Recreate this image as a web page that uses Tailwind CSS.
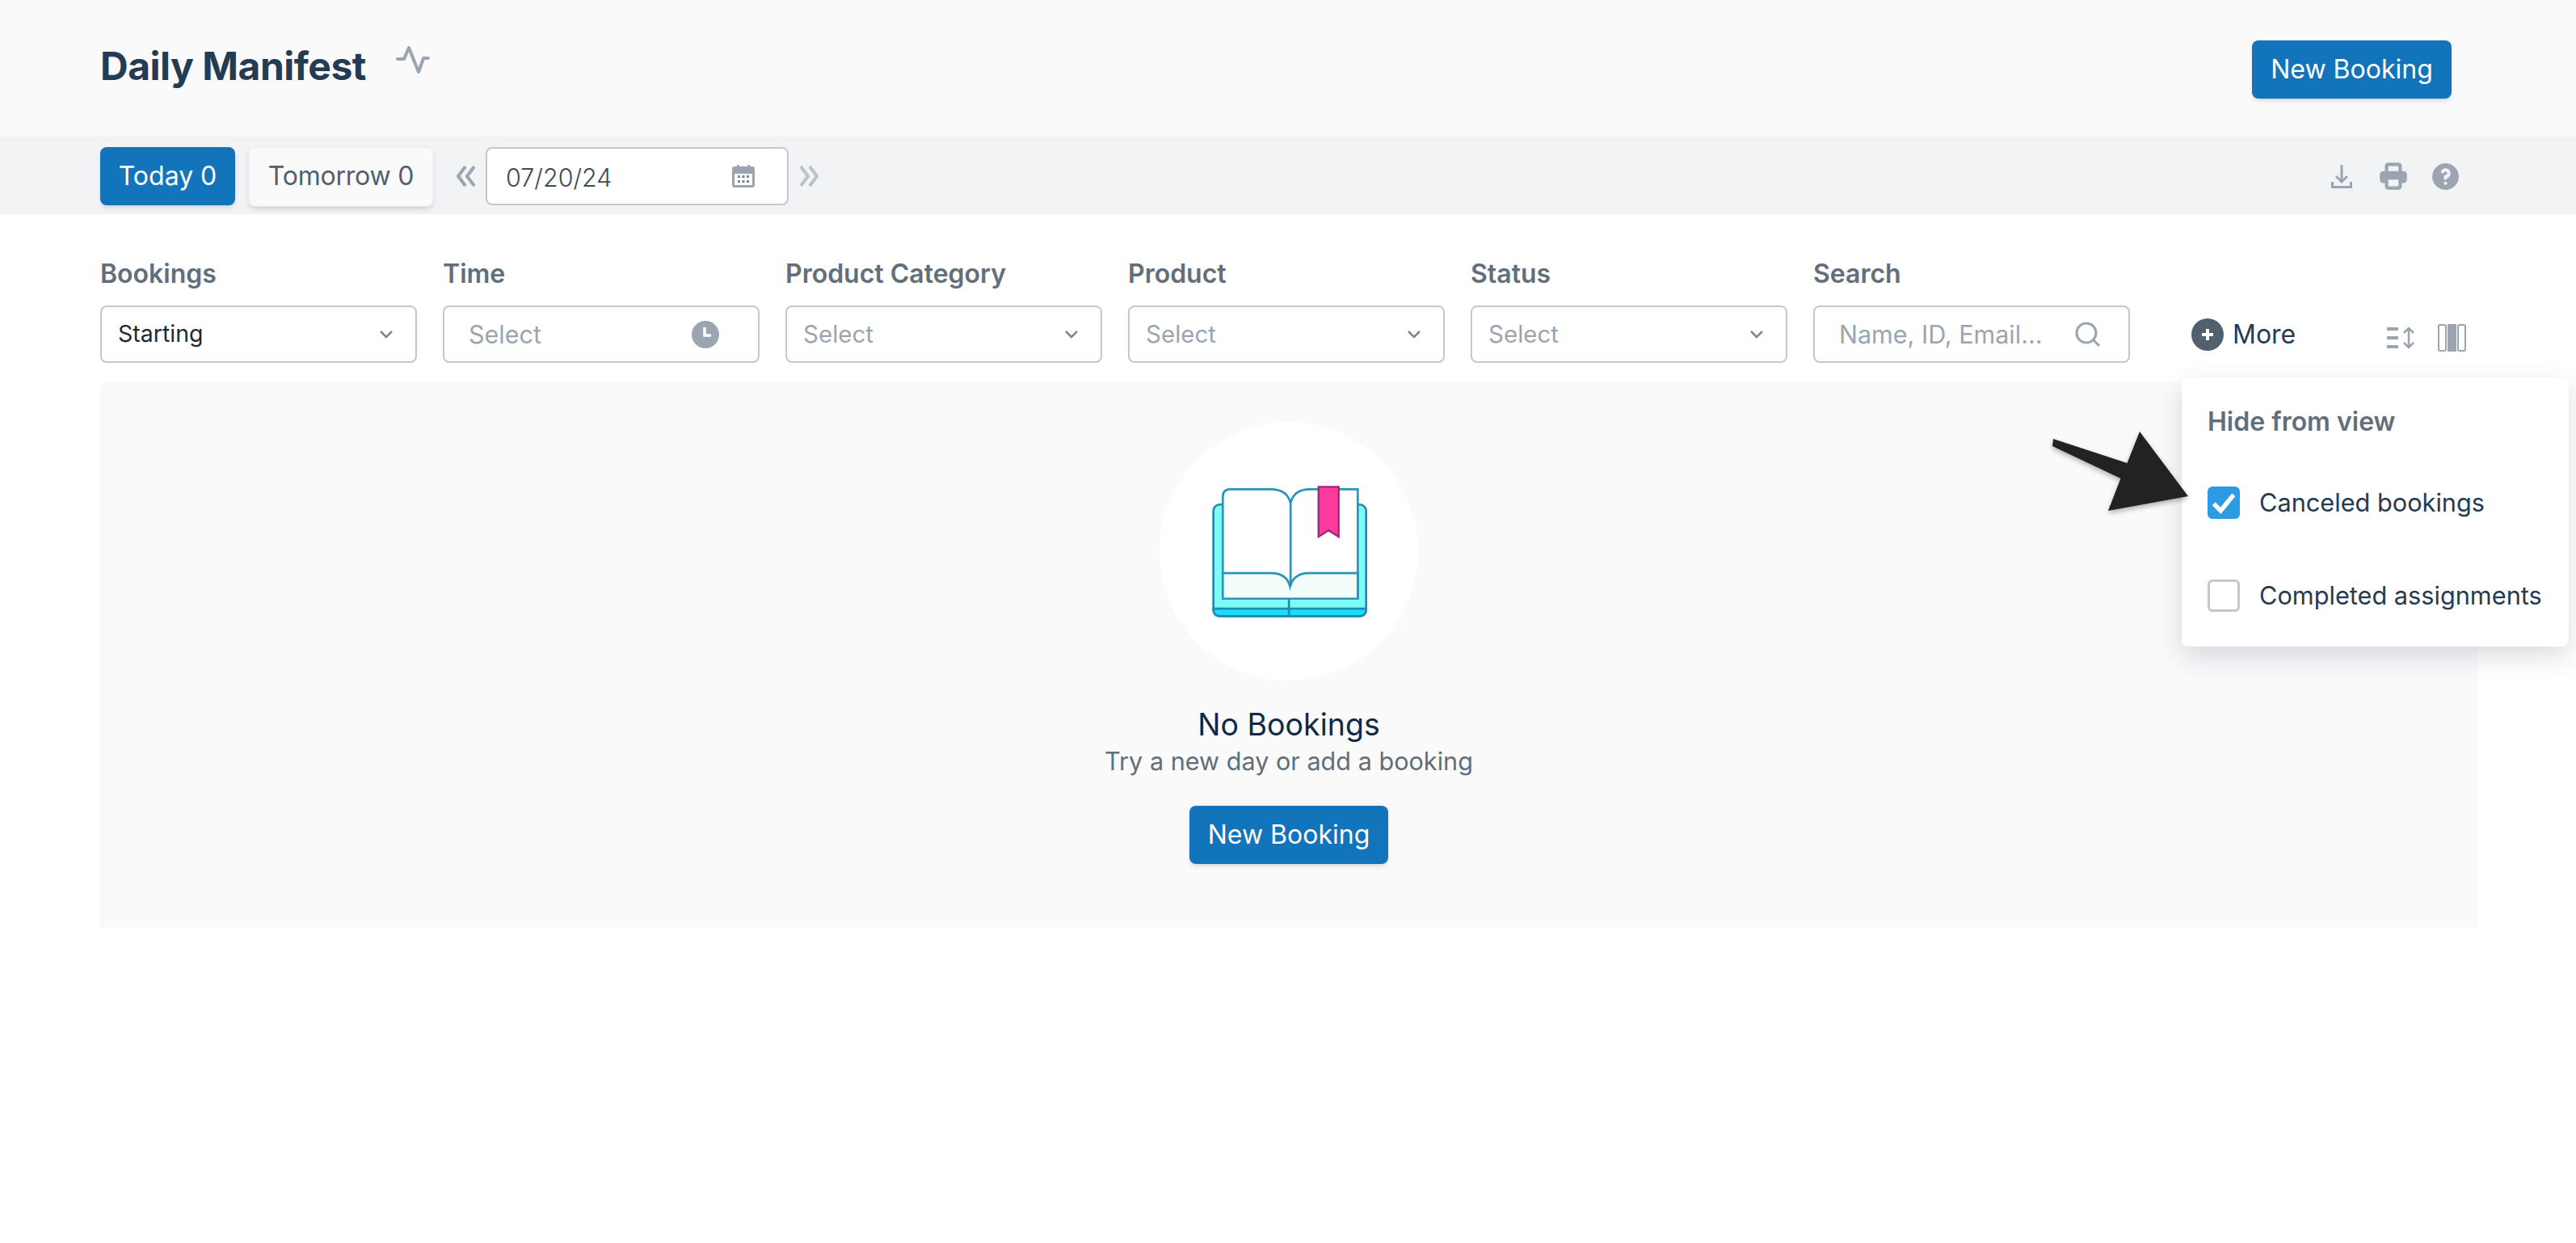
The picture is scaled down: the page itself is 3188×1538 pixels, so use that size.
<!DOCTYPE html>
<html lang="en">
<head>
    <meta charset="utf-8">
    <title>Daily Manifest</title>
    <script src="https://cdn.jsdelivr.net/npm/@tailwindcss/browser@4"></script>
</head>
<body class="relative min-h-screen overflow-hidden bg-white font-['Inter',sans-serif] text-[#1f2933]">

    <header class="flex h-[169px] items-start justify-between bg-[#fafafb] pr-[154px] pl-[124px] pt-[48px]">
        <div class="flex items-start">
            <h1 class="mt-[2px] text-[48px] leading-[64px] font-bold tracking-[-0.5px] text-[#243b53]">Daily Manifest</h1>
            <svg class="mt-[8px] ml-[37px] h-[36px] w-[42px]" viewBox="0 0 42 36" fill="none" stroke="#9aa5b1" stroke-width="4" stroke-linecap="round" stroke-linejoin="round">
                <path d="M2 17h8l6-14 12 30 6-17h6"/>
            </svg>
        </div>
        <button class="mt-[2px] h-[72px] w-[247px] rounded-[8px] bg-[#1274bb] text-[32px] text-white shadow-md">New Booking</button>
    </header>

    <div class="flex h-[96px] items-center justify-between bg-[#f2f3f5] pt-[2px] pr-[145px] pl-[124px]">
        <div class="flex items-center">
            <button class="h-[72px] w-[167px] rounded-[8px] bg-[#1274bb] text-[32px] text-white shadow-md">Today 0</button>
            <button class="ml-[16px] h-[75px] w-[230px] rounded-[8px] border-2 border-[#eceef1] bg-[#fafafb] text-[32px] tracking-[-0.2px] text-[#52606d] shadow-md">Tomorrow 0</button>
            <svg class="ml-[28px] h-[26px] w-[24px]" viewBox="0 0 24 26" fill="none" stroke="#9aa5b1" stroke-width="4">
                <path d="M11 1 2 13l9 12M22 1l-9 12 9 12"/>
            </svg>
            <div class="ml-[12px] flex h-[72px] w-[375px] items-center justify-between rounded-[8px] border-2 border-[#c4c7cd] bg-white pr-[40px] pl-[23px]">
                <span class="mt-[3px] text-[30.500px] font-light text-[#3e4c59]">07/20/24</span>
                <svg class="h-[28px] w-[28px]" viewBox="0 0 28 28">
                    <path fill="#9aa5b1" fill-rule="evenodd" d="M6 0h3v2h10V0h3v2h3a3 3 0 0 1 3 3v20a3 3 0 0 1-3 3H3a3 3 0 0 1-3-3V5a3 3 0 0 1 3-3h3zM3 9v16h22V9z"/>
                    <path fill="#9aa5b1" d="M2 7h24v4H2z"/>
                    <g fill="#7b8794">
                        <rect x="7" y="13" width="3" height="3"/><rect x="12.500" y="13" width="3" height="3"/><rect x="18" y="13" width="3" height="3"/>
                        <rect x="7" y="19" width="3" height="3"/><rect x="12.500" y="19" width="3" height="3"/><rect x="18" y="19" width="3" height="3"/>
                    </g>
                </svg>
            </div>
            <svg class="ml-[13px] h-[26px] w-[24px]" viewBox="0 0 24 26" fill="none" stroke="#bcc2ca" stroke-width="4">
                <path d="m2 1 9 12-9 12M13 1l9 12-9 12"/>
            </svg>
        </div>
        <div class="flex items-center">
            <svg class="h-[30px] w-[26px]" viewBox="0 0 26 30" fill="none" stroke="#9aa5b1" stroke-width="3">
                <path d="M13 1v21M6 15l7 7 7-7M1.500 22v6.500h23V22"/>
            </svg>
            <svg class="ml-[30px] h-[42px] w-[42px]" viewBox="0 0 20 20" fill="#9aa5b1">
                <path fill-rule="evenodd" d="M5 4v3H4a2 2 0 00-2 2v3a2 2 0 002 2h1v2a2 2 0 002 2h6a2 2 0 002-2v-2h1a2 2 0 002-2V9a2 2 0 00-2-2h-1V4a2 2 0 00-2-2H7a2 2 0 00-2 2zm8 0H7v3h6V4zm0 8H7v4h6v-4z" clip-rule="evenodd"/>
            </svg>
            <svg class="ml-[23px] h-[41px] w-[41px] -mr-[4px]" viewBox="0 0 20 20" fill="#9aa5b1">
                <path fill-rule="evenodd" d="M18 10a8 8 0 11-16 0 8 8 0 0116 0zm-8-3a1 1 0 00-.867.5 1 1 0 11-1.731-1A3 3 0 0113 8a3.001 3.001 0 01-2 2.83V11a1 1 0 11-2 0v-1a1 1 0 011-1 1 1 0 100-2zm0 8a1 1 0 100-2 1 1 0 000 2z" clip-rule="evenodd"/>
            </svg>
        </div>
    </div>

    <main class="pr-[122px] pl-[124px]">
        <div class="flex gap-[32px] pt-[54px]">
            <div class="w-[392px]">
                <label class="mb-[19px] block text-[32px] leading-[40px] font-semibold text-[#616e7c]">Bookings</label>
                <div class="flex h-[71px] items-center justify-between rounded-[8px] border-2 border-[#c4c7cd] pr-[27px] pl-[20px] text-[28.500px]">
                    <span>Starting</span>
                    <svg class="h-[12px] w-[18px]" viewBox="0 0 18 12" fill="none" stroke="#7b8794" stroke-width="2.500"><path d="m2 2 7 7 7-7"/></svg>
                </div>
            </div>
            <div class="w-[392px]">
                <label class="mb-[19px] block text-[32px] leading-[40px] font-semibold text-[#616e7c]">Time</label>
                <div class="flex h-[71px] items-center justify-between rounded-[8px] border-2 border-[#c4c7cd] pr-[48px] pl-[30px] text-[30.500px] text-[#9aa5b1]">
                    <span>Select</span>
                    <svg class="h-[34px] w-[34px]" viewBox="0 0 34 34">
                        <circle cx="17" cy="17" r="17" fill="#9aa5b1"/>
                        <path d="M16 8v10h8" fill="none" stroke="#fff" stroke-width="3.500"/>
                    </svg>
                </div>
            </div>
            <div class="w-[392px]">
                <label class="mb-[19px] block text-[32px] leading-[40px] font-semibold text-[#616e7c]">Product Category</label>
                <div class="flex h-[71px] items-center justify-between rounded-[8px] border-2 border-[#c4c7cd] pr-[27px] pl-[20px] text-[29.500px] text-[#9aa5b1]">
                    <span>Select</span>
                    <svg class="h-[12px] w-[18px]" viewBox="0 0 18 12" fill="none" stroke="#7b8794" stroke-width="2.500"><path d="m2 2 7 7 7-7"/></svg>
                </div>
            </div>
            <div class="w-[392px]">
                <label class="mb-[19px] block text-[32px] leading-[40px] font-semibold text-[#616e7c]">Product</label>
                <div class="flex h-[71px] items-center justify-between rounded-[8px] border-2 border-[#c4c7cd] pr-[27px] pl-[20px] text-[29.500px] text-[#9aa5b1]">
                    <span>Select</span>
                    <svg class="h-[12px] w-[18px]" viewBox="0 0 18 12" fill="none" stroke="#7b8794" stroke-width="2.500"><path d="m2 2 7 7 7-7"/></svg>
                </div>
            </div>
            <div class="w-[392px]">
                <label class="mb-[19px] block text-[32px] leading-[40px] font-semibold text-[#616e7c]">Status</label>
                <div class="flex h-[71px] items-center justify-between rounded-[8px] border-2 border-[#c4c7cd] pr-[27px] pl-[20px] text-[29.500px] text-[#9aa5b1]">
                    <span>Select</span>
                    <svg class="h-[12px] w-[18px]" viewBox="0 0 18 12" fill="none" stroke="#7b8794" stroke-width="2.500"><path d="m2 2 7 7 7-7"/></svg>
                </div>
            </div>
            <div class="w-[392px]">
                <label class="mb-[19px] block text-[32px] leading-[40px] font-semibold text-[#616e7c]">Search</label>
                <div class="flex h-[71px] items-center justify-between rounded-[8px] border-2 border-[#c4c7cd] pr-[34px] pl-[30px] text-[30.500px] text-[#9aa5b1]">
                    <span>Name, ID, Email...</span>
                    <svg class="h-[32px] w-[32px]" viewBox="0 0 32 32" fill="none" stroke="#9aa5b1" stroke-width="3"><circle cx="14" cy="14" r="12"/><path d="m23 23 7 7"/></svg>
                </div>
            </div>
            <div class="ml-[44px] flex h-[71px] items-center self-end">
                <span class="flex h-[40px] w-[40px] items-center justify-center rounded-full bg-[#52606d]">
                    <svg class="h-[18px] w-[18px]" viewBox="0 0 18 18" fill="none" stroke="#fff" stroke-width="4"><path d="M9 2v14M2 9h14"/></svg>
                </span>
                <span class="ml-[11px] text-[32px] text-[#243b53]">More</span>
                <svg class="mt-[8px] ml-[112px] h-[28px] w-[36px]" viewBox="0 0 36 28" fill="none" stroke="#9aa5b1">
                    <path stroke-width="4" d="M1 3h14M1 14h14M1 25h14"/>
                    <path stroke-width="2.500" d="M28 2v24M22 8l6-6 6 6M22 20l6 6 6-6"/>
                </svg>
                <svg class="mt-[8px] ml-[28px] h-[34px] w-[35px]" viewBox="0 0 35 34" fill="none" stroke="#9aa5b1" stroke-width="2">
                    <rect x="1" y="1" width="9" height="32" rx="2"/>
                    <rect x="13" y="1" width="9" height="32" fill="#9aa5b1"/>
                    <rect x="25" y="1" width="9" height="32" rx="2"/>
                </svg>
            </div>
        </div>

        <section class="mt-[24px] flex h-[676px] flex-col items-center bg-[#fafafb] pt-[49px]">
            <div class="flex h-[320px] w-[320px] items-center justify-center rounded-full bg-white">
                <svg class="ml-[3px] h-[167px] w-[193px]" viewBox="300 300 580 500">
                    <rect x="305" y="375" width="568" height="415" rx="24" fill="#7ffbf5" stroke="#1a8db3" stroke-width="8"/>
                    <path d="M305 762h568v6a22 22 0 0 1-22 22H327a22 22 0 0 1-22-22z" fill="#1fdcf6" stroke="#1a8db3" stroke-width="8"/>
                    <path d="M586 725v65" stroke="#1a8db3" stroke-width="8"/>
                    <path d="M340 725V346q0-28 28-28h150q62 0 74 52 12-52 72-52h178v407z" fill="#fff" stroke="#2a95b8" stroke-width="8"/>
                    <path d="M340 630h180q58 0 70 50 14-50 70-50h182v95H340z" fill="#f3fdfc" stroke="#2a95b8" stroke-width="8"/>
                    <path d="M592 370v310" stroke="#2a95b8" stroke-width="8"/>
                    <path d="M696 309h75v186l-38-24-37 24z" fill="#ff3c9b" stroke="#a5217f" stroke-width="7"/>
                </svg>
            </div>
            <h2 class="mt-[31px] text-[37.500px] leading-[48px] font-normal text-[#102a43]">No Bookings</h2>
            <p class="text-[30.600px] leading-[42px] text-[#616e7c]">Try a new day or add a booking</p>
            <button class="mt-[34px] h-[72px] w-[246px] rounded-[8px] bg-[#1274bb] text-[32px] text-white shadow-md">New Booking</button>
        </section>
    </main>

    <!-- popover sits on top of the panel -->
    <div class="absolute top-[467px] left-[2700px] h-[333px] w-[479px] rounded-[8px] bg-white pl-[32px] shadow-[0_12px_32px_rgba(50,60,80,0.18)]">
        <p class="mt-[35px] text-[32px] leading-[40px] font-semibold text-[#616e7c]">Hide from view</p>
        <div class="mt-[60px] flex items-center">
            <span class="flex h-[40px] w-[40px] items-center justify-center rounded-[6px] bg-[#2d9be3]">
                <svg class="h-[30px] w-[32px]" viewBox="0 0 26 24" fill="none" stroke="#fff" stroke-width="4.500"><path d="m3 13 7 7L23 4"/></svg>
            </span>
            <span class="ml-[24px] text-[30.700px] leading-[40px] text-[#243b53]">Canceled bookings</span>
        </div>
        <div class="mt-[75px] flex items-center">
            <span class="h-[40px] w-[40px] rounded-[6px] border-[3px] border-[#c4c7cd]"></span>
            <span class="ml-[24px] text-[30.700px] leading-[40px] text-[#243b53]">Completed assignments</span>
        </div>
    </div>

    <!-- annotation arrow -->
    <svg class="absolute top-[530px] left-[2535px] h-[110px] w-[178px] drop-shadow-[0_3px_3px_rgba(0,0,0,0.3)]" viewBox="2535 530 178 110">
        <path d="M2541 543 2540 552 2624.500 592 2609 632 2708 614 2648 534 2632.500 573z" fill="#222"/>
    </svg>
</body>
</html>
